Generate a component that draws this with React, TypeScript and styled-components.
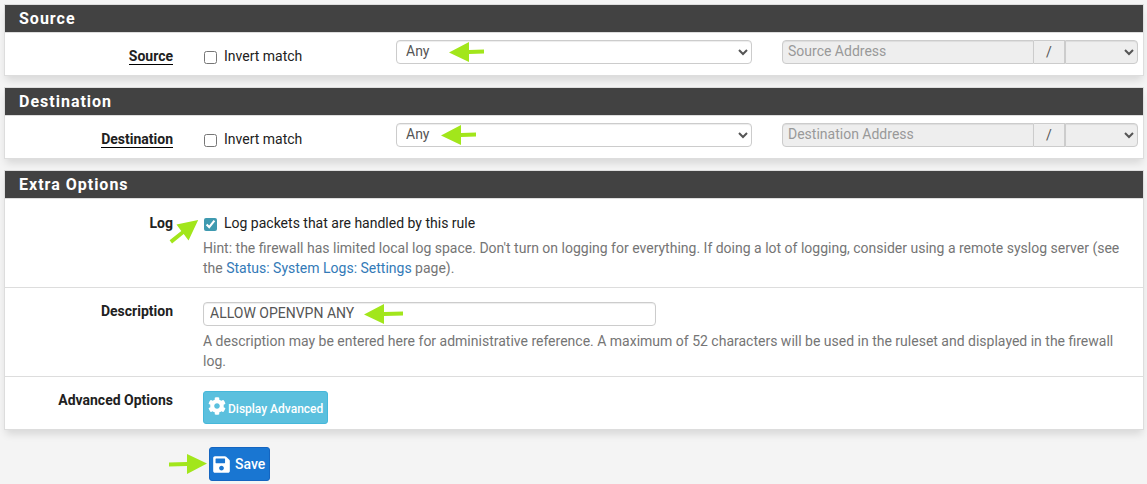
import React from 'react';
import styled, { createGlobalStyle } from 'styled-components';
import { FaCog, FaSave } from 'react-icons/fa';

const Global = createGlobalStyle`
  *, *::before, *::after { box-sizing: border-box; }
  body {
    margin: 0;
    background: #f4f4f4;
    color: #212121;
    font: 14px/20px Roboto, "Liberation Sans", sans-serif;
  }
  input, select, button { font-family: inherit; }
`;

const Page = styled.form`
  padding: 4px 3px 2px 4px;
`;

const Panel = styled.section`
  margin-bottom: 11px;
  border: 1px solid #ddd;
  background: #fff;
  box-shadow: 0 6px 8px -2px rgba(0, 0, 0, 0.12);
`;

const PanelTitle = styled.h2`
  margin: 0;
  padding: 0 14px;
  background: #424242;
  color: #fff;
  font-size: 16px;
  font-weight: 700;
  line-height: 27px;
  letter-spacing: 1px;
`;

const Row = styled.div<{ $bottom: number }>`
  display: grid;
  grid-template-columns: repeat(12, minmax(0, 1fr));
  column-gap: 30px;
  align-items: start;
  padding: 7px 5px ${(p) => p.$bottom}px;
  border-top: 1px solid #ddd;
`;

const Cell = styled.div<{ $span: number; $top?: number }>`
  grid-column: span ${(p) => p.$span};
  padding-top: ${(p) => p.$top ?? 0}px;
`;

const LabelCell = styled(Cell)`
  display: flex;
  justify-content: flex-end;
  font-weight: 700;
`;

const Term = styled.span<{ $required?: boolean }>`
  line-height: ${(p) => (p.$required ? 16 : 20)}px;
  border-bottom: ${(p) => (p.$required ? '1px solid #000' : '0')};
`;

const Check = styled.label`
  position: relative;
  display: flex;
  width: fit-content;
  align-items: center;
  gap: 7px;
  padding-left: 1px;
  input {
    width: 13px;
    height: 13px;
    margin: 2px 0 0;
    accent-color: #3f9ab0;
  }
`;

const Field = styled.div`
  position: relative;
  display: flex;
`;

const TextBox = styled.input`
  flex: 1;
  min-width: 0;
  height: 24px;
  padding: 0 6px 2px;
  border: 1px solid #ccc;
  border-radius: 4px;
  background: #fff;
  color: #555;
  font-size: 14px;
  box-shadow: inset 0 1px 1px rgba(0, 0, 0, 0.075);
  &:disabled { background: #eee; }
  &::placeholder { color: #999; }
`;

const Choice = styled.select`
  flex: 1;
  min-width: 0;
  height: 24px;
  padding: 0 0 2px 5px;
  border: 1px solid #ccc;
  border-radius: 4px;
  background: #fff;
  color: #555;
  font-size: 14px;
  box-shadow: inset 0 1px 1px rgba(0, 0, 0, 0.075);
  &:disabled { background: #eee; opacity: 1; }
`;

const AddressBox = styled(TextBox)`
  padding-left: 5px;
  border-radius: 4px 0 0 4px;
`;

const Slash = styled.span`
  width: 31px;
  border: 1px solid #ccc;
  border-left: 0;
  background: #eee;
  color: #555;
  line-height: 22px;
  text-align: center;
`;

const MaskChoice = styled(Choice)`
  flex: 0 0 73px;
  border-radius: 0 4px 4px 0;
`;

const Help = styled.p`
  margin: 5px 0 0;
  color: #757575;
`;

const Link = styled.a`
  color: #337ab7;
  text-decoration: none;
`;

const Button = styled.button`
  position: relative;
  display: flex;
  align-items: center;
  border: 1px solid;
  border-radius: 3px;
  color: #fff;
  font-weight: 500;
`;

const InfoButton = styled(Button)`
  height: 33px;
  gap: 2px;
  padding: 0 4px;
  border-color: #46b8da;
  background: #5bc0de;
  font-size: 12px;
  svg { margin-bottom: 3px; }
  span { padding-top: 2px; }
`;

const SaveButton = styled(Button)`
  height: 34px;
  gap: 4px;
  padding: 0 4px 0 2px;
  border-color: #1565c0;
  background: #1976d2;
  font-size: 14px;
`;

const Actions = styled.div`
  display: flex;
  padding: 6px 0 0 205px;
`;

const ArrowSvg = styled.svg<{ $left: number; $top: number }>`
  position: absolute;
  left: ${(p) => p.$left}px;
  top: ${(p) => p.$top}px;
  overflow: visible;
  pointer-events: none;
`;

type ArrowProps = { left: number; top: number; length?: number; angle?: number };

function Arrow({ left, top, length = 35, angle = 0 }: ArrowProps) {
  return (
    <ArrowSvg $left={left} $top={top} width={length} height="20" viewBox={`0 0 ${length} 20`} aria-hidden="true">
      <path
        d={`M0 10.500 20 0V8L${length} 7.500V11.500L20 12V20Z`}
        fill="#a2e61b"
        transform={`rotate(${angle} ${length / 2} 10)`}
      />
    </ArrowSvg>
  );
}

function EndpointPanel({ name, arrowLeft }: { name: string; arrowLeft: number }) {
  const id = name.toLowerCase();
  return (
    <Panel>
      <PanelTitle>{name}</PanelTitle>
      <Row $bottom={9}>
        <LabelCell $span={2} $top={8}>
          <Term $required>{name}</Term>
        </LabelCell>
        <Cell $span={2} $top={6}>
          <Check>
            <input type="checkbox" name={`${id}-invert`} />
            Invert match
          </Check>
        </Cell>
        <Cell $span={4}>
          <Field>
            <Choice aria-label={`${name} type`} defaultValue="any">
              <option value="any">Any</option>
            </Choice>
            <Arrow left={arrowLeft} top={2} />
          </Field>
        </Cell>
        <Cell $span={4}>
          <Field>
            <AddressBox disabled aria-label={`${name} Address`} placeholder={`${name} Address`} />
            <Slash>/</Slash>
            <MaskChoice disabled aria-label={`${name} mask`} />
          </Field>
        </Cell>
      </Row>
    </Panel>
  );
}

export default function App() {
  return (
    <>
      <Global />
      <Page onSubmit={(e) => e.preventDefault()}>
        <EndpointPanel name="Source" arrowLeft={53} />
        <EndpointPanel name="Destination" arrowLeft={45} />
        <Panel>
          <PanelTitle>Extra Options</PanelTitle>
          <Row $bottom={9}>
            <LabelCell $span={2} $top={7}>
              <Term>Log</Term>
            </LabelCell>
            <Cell $span={10} $top={7}>
              <Check>
                <input type="checkbox" name="log" defaultChecked />
                Log packets that are handled by this rule
                <Arrow left={-36} top={8} angle={143} />
              </Check>
              <Help>
                Hint: the firewall has limited local log space. Don't turn on logging for everything. If doing a
                lot of logging, consider using a remote syslog server (see the{' '}
                <Link href="#settings">Status: System Logs: Settings</Link> page).
              </Help>
            </Cell>
          </Row>
          <Row $bottom={5}>
            <LabelCell $span={2} $top={6}>
              <Term as="label" htmlFor="description">Description</Term>
            </LabelCell>
            <Cell $span={5} $top={7}>
              <Field>
                <TextBox id="description" defaultValue="ALLOW OPENVPN ANY" />
                <Arrow left={161} top={2} length={39} />
              </Field>
            </Cell>
            <Cell $span={5} />
            <Cell $span={2} />
            <Cell $span={10}>
              <Help>
                A description may be entered here for administrative reference. A maximum of 52 characters will be
                used in the ruleset and displayed in the firewall log.
              </Help>
            </Cell>
          </Row>
          <Row $bottom={5}>
            <LabelCell $span={2} $top={6}>
              <Term>Advanced Options</Term>
            </LabelCell>
            <Cell $span={10} $top={7}>
              <InfoButton type="button">
                <FaCog size={18} aria-hidden="true" />
                <span>Display Advanced</span>
              </InfoButton>
            </Cell>
          </Row>
        </Panel>
        <Actions>
          <SaveButton type="submit">
            <FaSave size={19} aria-hidden="true" />
            Save
            <Arrow left={-41} top={6} length={38} angle={180} />
          </SaveButton>
        </Actions>
      </Page>
    </>
  );
}
